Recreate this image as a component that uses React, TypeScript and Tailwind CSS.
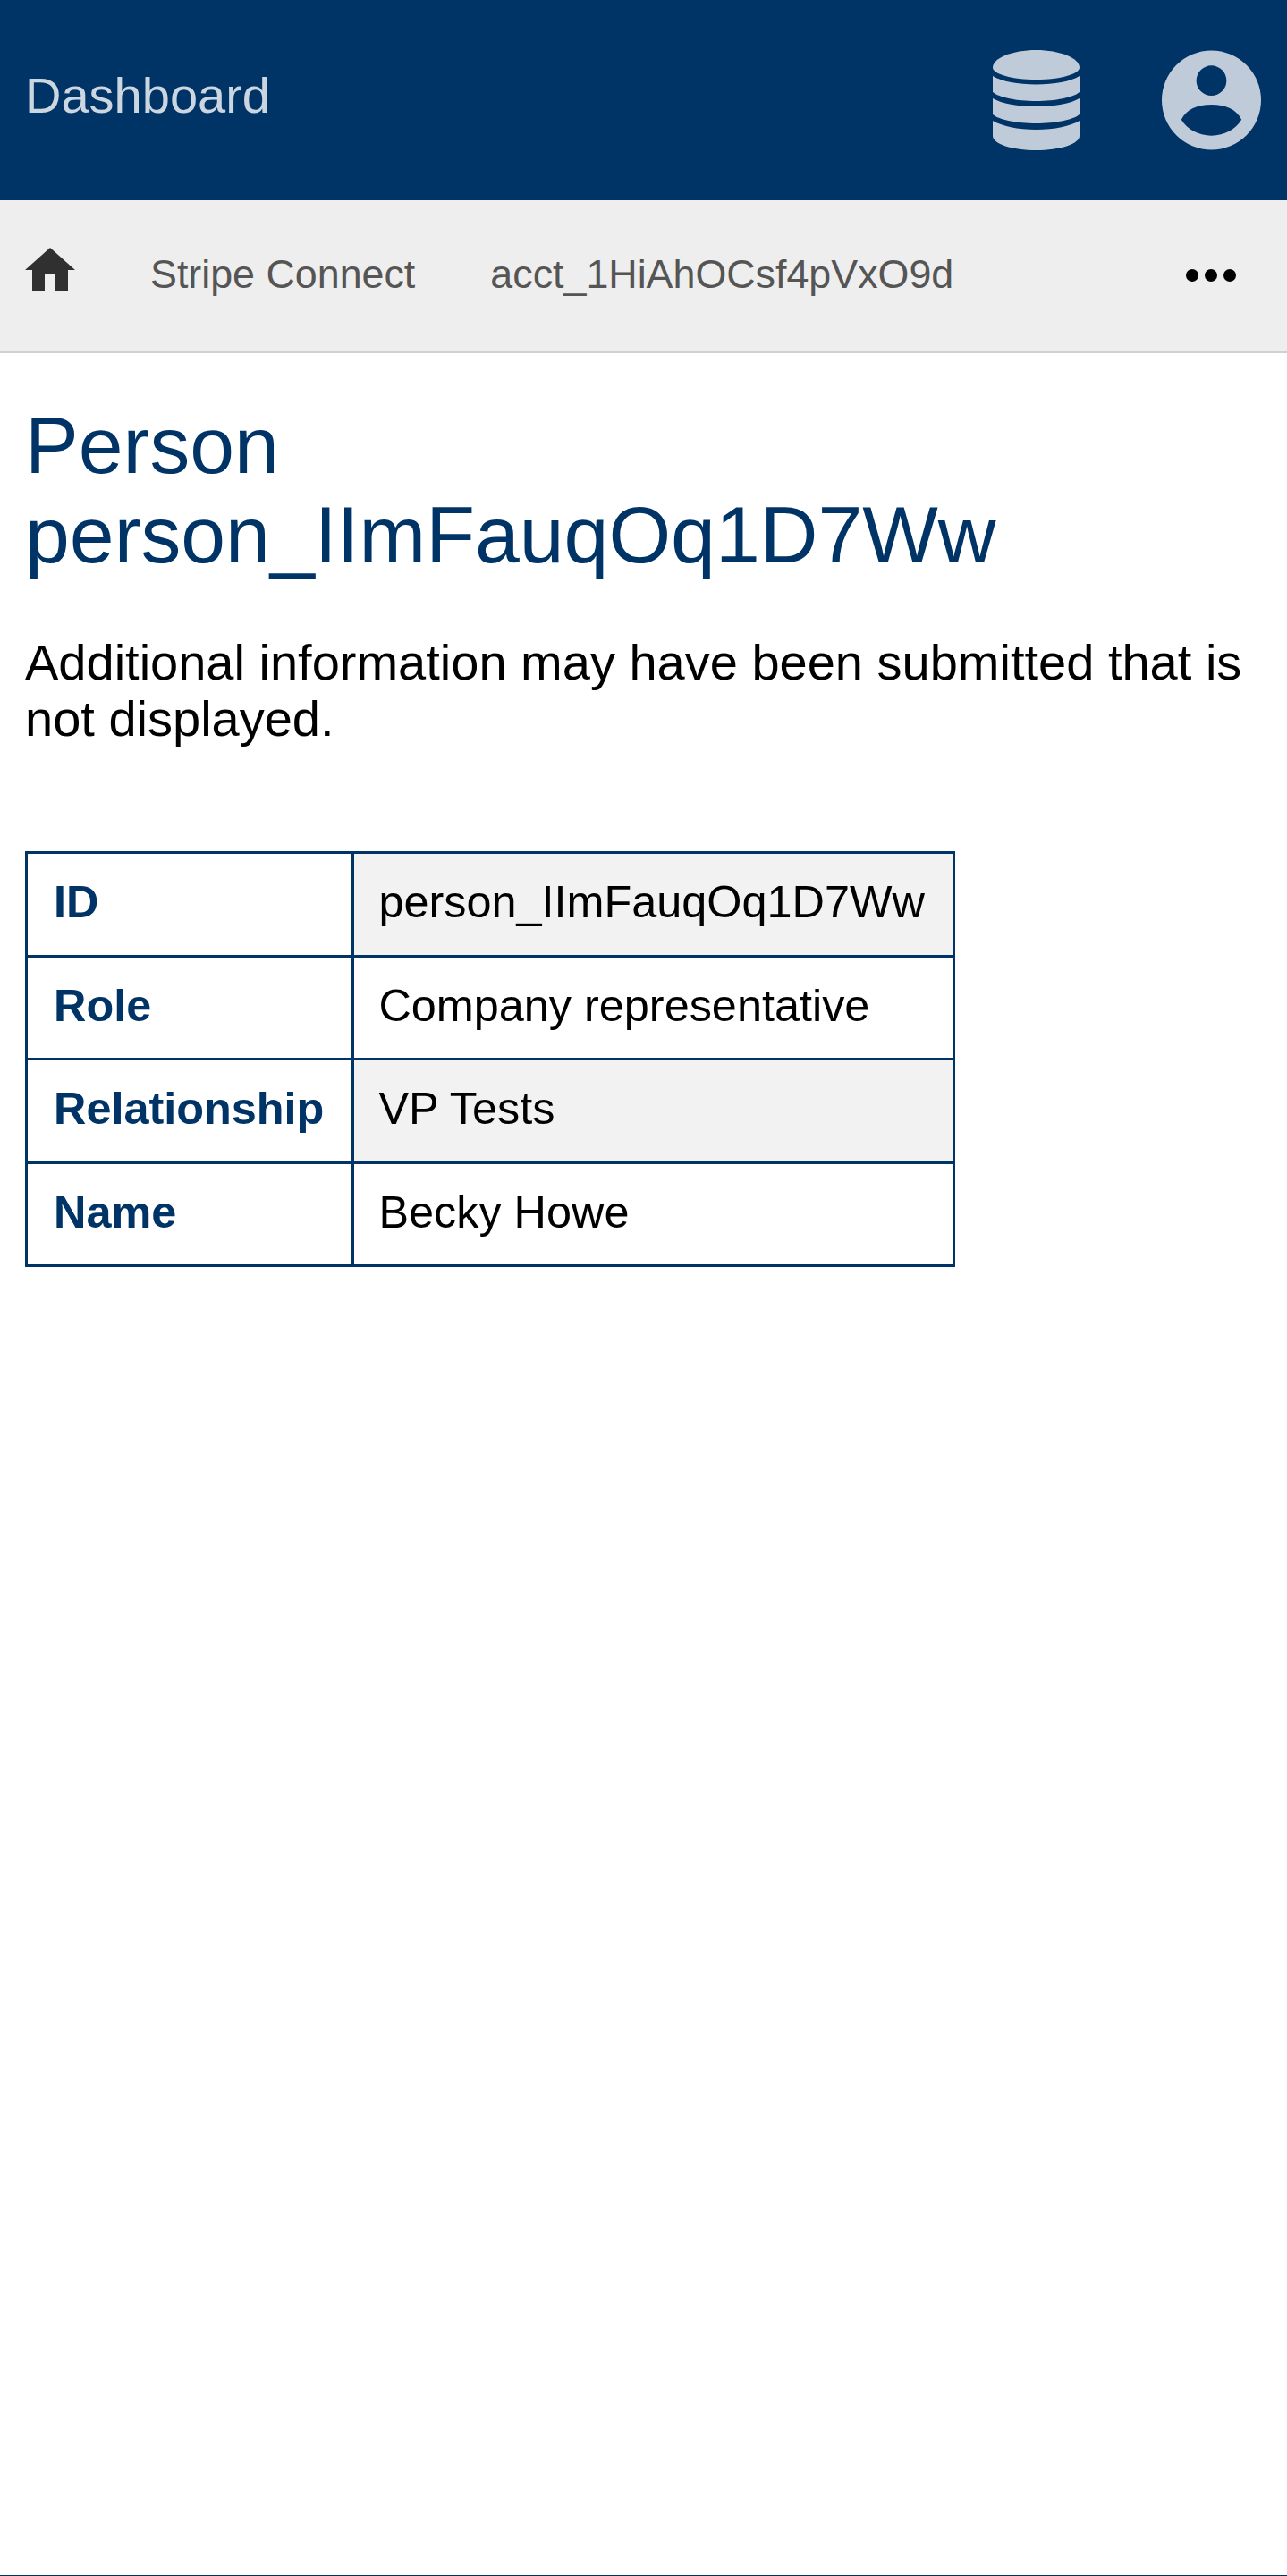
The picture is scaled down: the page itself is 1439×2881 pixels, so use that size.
const rows = [
  { label: "ID", value: "person_IImFauqOq1D7Ww" },
  { label: "Role", value: "Company representative" },
  { label: "Relationship", value: "VP Tests" },
  { label: "Name", value: "Becky Howe" },
];

function DatabaseIcon() {
  return (
    <svg viewBox="0 0 97 112" className="mr-[92px] h-[112px] w-[97px]" aria-hidden="true">
      <g fill="#bfcbd9">
        <path d="M0 19.5C0 9 22 0 48.5 0S97 9 97 19.5C97 27 75 33 48.5 33S0 27 0 19.5Z" />
        <path d="M0 29C10 35 28 38.5 48.5 38.5S87 35 97 29V47C90 53 70 57 48.5 57S7 53 0 47Z" />
        <path d="M0 54C10 60 28 63 48.5 63S87 60 97 54V72C90 78 70 82 48.5 82S7 78 0 72Z" />
        <path d="M0 79C10 85 28 89 48.5 89S87 85 97 79V96C97 105 75 112 48.5 112S0 105 0 96Z" />
      </g>
    </svg>
  );
}

function UserIcon() {
  return (
    <svg viewBox="0 0 112 112" className="h-[112px] w-[111px]" aria-hidden="true">
      <path
        fill="#bfcbd9"
        fillRule="evenodd"
        d="M56 0a56 56 0 1 0 0 112A56 56 0 0 0 56 0Zm0 17a17 17 0 1 1 0 34 17 17 0 0 1 0-34Zm0 44c16 0 28 5 34 17-7 11-19 18-34 18s-27-7-34-18c6-12 18-17 34-17Z"
      />
    </svg>
  );
}

function HomeIcon() {
  return (
    <svg viewBox="0 0 56 48" className="mb-[14px] h-[48px] w-[56px]" aria-hidden="true">
      <path fill="#303030" d="M28 0 56 25H48V48H34V29H22V48H8V25H0Z" />
    </svg>
  );
}

function DotsIcon() {
  return (
    <svg viewBox="0 0 56 14" className="h-[14px] w-[56px]" aria-hidden="true">
      <circle cx="7" cy="7" r="7" fill="#000" />
      <circle cx="28" cy="7" r="7" fill="#000" />
      <circle cx="49" cy="7" r="7" fill="#000" />
    </svg>
  );
}

export default function App() {
  return (
    <div className="flex min-h-[2881px] flex-col border-b border-[#003366] bg-white font-['Liberation_Sans',Arial,sans-serif]">
      <header className="flex h-[224px] items-center bg-[#003366] pl-[28px] pr-[29px]">
        <span className="mb-[10px] flex-1 text-[56px] leading-[64px] text-[#ccd6e0]">Dashboard</span>
        <DatabaseIcon />
        <UserIcon />
      </header>

      <nav className="flex h-[171px] items-center border-b-[3px] border-[#d0d0d0] bg-[#eeeeee] pl-[28px] pr-[57px] text-[44.8px] text-[#555555]">
        <HomeIcon />
        <span className="mb-[2px] ml-[84px]">Stripe Connect</span>
        <span className="mb-[2px] ml-[84px] flex-1">acct_1HiAhOCsf4pVxO9d</span>
        <DotsIcon />
      </nav>

      <main className="px-[28px]">
        <h1 className="mt-[53px] text-[89.6px] leading-[100px] text-[#003366]">
          Person
          <br />
          person_IImFauqOq1D7Ww
        </h1>
        <p className="mt-[61px] text-[56px] leading-[63px] text-black">
          Additional information may have been submitted that is not displayed.
        </p>
        <table className="mt-[117px] border-collapse border-[3px] border-[#003366] text-[50.4px] leading-[56.5px]">
          <tbody>
            {rows.map((row, i) => (
              <tr key={row.label}>
                <th className="border-[3px] border-[#003366] pb-[30px] pl-[29px] pr-[31px] pt-[26px] text-left font-bold text-[#003366]">
                  {row.label}
                </th>
                <td className={`border-[3px] border-[#003366] pb-[30px] pl-[27px] pr-[31px] pt-[26px] text-black ${i % 2 === 0 ? "bg-[#f2f2f2]" : "bg-white"}`}>
                  {row.value}
                </td>
              </tr>
            ))}
          </tbody>
        </table>
      </main>
    </div>
  );
}
